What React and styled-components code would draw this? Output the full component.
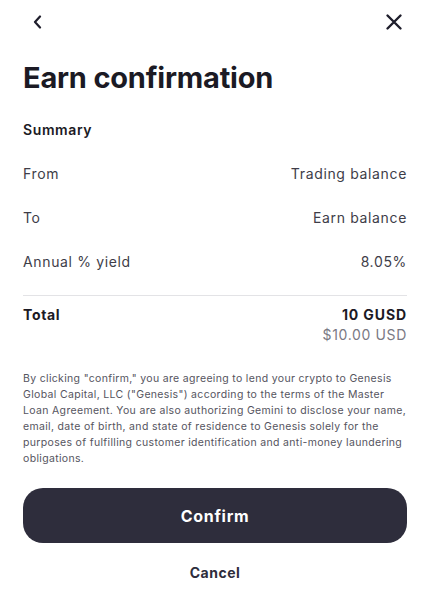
import styled, { createGlobalStyle } from "styled-components";

const GlobalStyle = createGlobalStyle`
  * { box-sizing: border-box; }
  body {
    margin: 0;
    background: #ffffff;
    font-family: Inter, "Noto Sans", sans-serif;
    color: #1b1a24;
  }
`;

const Page = styled.div`
  width: 424px;
  min-height: 613px;
  padding: 0 17px 0 23px;
  display: flex;
  flex-direction: column;
`;

const TopBar = styled.div`
  height: 44px;
  display: flex;
  align-items: center;
  justify-content: space-between;
  padding: 0 1px 0 3px;
`;

const IconButton = styled.button`
  border: none;
  background: none;
  padding: 0;
  width: 24px;
  height: 24px;
  display: flex;
  align-items: center;
  justify-content: center;
  color: #1f1e2c;
  cursor: pointer;
`;

const Title = styled.h1`
  margin: 16px 0 0;
  font-size: 29px;
  font-weight: 700;
  letter-spacing: -0.2px;
  line-height: 36px;
  color: #1b1a24;
`;

const SectionLabel = styled.h2`
  margin: 24px 0 0;
  font-size: 14px;
  font-weight: 600;
  letter-spacing: 0.6px;
  line-height: 20px;
  color: #1b1a24;
`;

const Row = styled.div`
  display: flex;
  justify-content: space-between;
  align-items: flex-start;
  padding: ${(p) => (p.$total ? "9px 0 0" : "0")};
  margin-top: ${(p) => (p.$total ? "0" : "24px")};
  font-size: 14px;
  line-height: 20px;
  letter-spacing: 0.65px;
  color: #3e3d48;
`;

const Label = styled.span`
  font-weight: ${(p) => (p.$bold ? 700 : 400)};
  color: ${(p) => (p.$bold ? "#1b1a24" : "#3e3d48")};
`;

const ValueStack = styled.div`
  display: flex;
  flex-direction: column;
  align-items: flex-end;
`;

const Value = styled.span`
  font-weight: ${(p) => (p.$bold ? 700 : 400)};
  letter-spacing: ${(p) => (p.$bold ? "0.9px" : "0.65px")};
  color: ${(p) => (p.$bold ? "#1b1a24" : p.$muted ? "#7a7984" : "#3e3d48")};
`;

const Divider = styled.hr`
  margin: 23px 0 0;
  border: none;
  border-top: 1px solid #e3e3e6;
`;

const Disclaimer = styled.p`
  margin: 26px 0 0;
  font-size: 10.5px;
  line-height: 16px;
  letter-spacing: 0.33px;
  color: #55545e;
`;

const ConfirmButton = styled.button`
  margin-top: 21px;
  height: 55px;
  width: 100%;
  border: none;
  border-radius: 20px;
  background: #2e2d3c;
  color: #ffffff;
  font-family: inherit;
  font-size: 16px;
  font-weight: 700;
  letter-spacing: 0.7px;
  cursor: pointer;
`;

const CancelButton = styled.button`
  margin-top: 18px;
  align-self: center;
  border: none;
  background: none;
  padding: 2px 8px;
  font-family: inherit;
  font-size: 14px;
  font-weight: 700;
  letter-spacing: 0.5px;
  line-height: 20px;
  color: #2e2d3c;
  cursor: pointer;
`;

const rows = [
  { label: "From", value: "Trading balance" },
  { label: "To", value: "Earn balance" },
  { label: "Annual % yield", value: "8.05%" },
];

function BackIcon() {
  return (
    <svg width="14" height="14" viewBox="0 0 14 14" fill="none">
      <path d="M9 1.5L4 7l5 5.5" stroke="currentColor" strokeWidth="2.2" strokeLinecap="round" strokeLinejoin="round" />
    </svg>
  );
}

function CloseIcon() {
  return (
    <svg width="18" height="18" viewBox="0 0 18 18" fill="none">
      <path d="M2.5 2.5l13 13M15.5 2.5l-13 13" stroke="currentColor" strokeWidth="2.4" strokeLinecap="round" />
    </svg>
  );
}

export default function App() {
  return (
    <>
      <GlobalStyle />
      <Page>
        <TopBar>
          <IconButton aria-label="Back">
            <BackIcon />
          </IconButton>
          <IconButton aria-label="Close">
            <CloseIcon />
          </IconButton>
        </TopBar>
        <Title>Earn confirmation</Title>
        <SectionLabel>Summary</SectionLabel>
        {rows.map((r) => (
          <Row key={r.label}>
            <Label>{r.label}</Label>
            <Value>{r.value}</Value>
          </Row>
        ))}
        <Divider />
        <Row $total>
          <Label $bold>Total</Label>
          <ValueStack>
            <Value $bold>10 GUSD</Value>
            <Value $muted>$10.00 USD</Value>
          </ValueStack>
        </Row>
        <Disclaimer>
          By clicking "confirm," you are agreeing to lend your crypto to Genesis
          Global Capital, LLC ("Genesis") according to the terms of the Master
          Loan Agreement. You are also authorizing Gemini to disclose your name,
          email, date of birth, and state of residence to Genesis solely for the
          purposes of fulfilling customer identification and anti-money
          laundering obligations.
        </Disclaimer>
        <ConfirmButton>Confirm</ConfirmButton>
        <CancelButton>Cancel</CancelButton>
      </Page>
    </>
  );
}
